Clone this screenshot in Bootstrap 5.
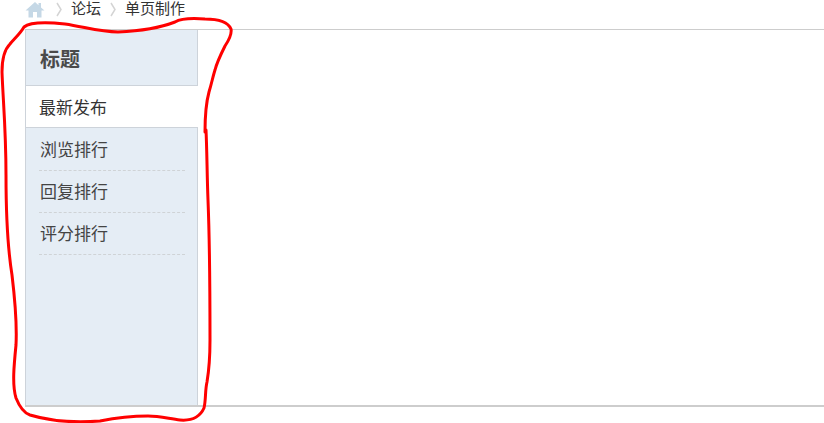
<!DOCTYPE html>
<html lang="zh-CN">
<head>
<meta charset="utf-8">
<title>单页制作</title>
<link rel="stylesheet" href="https://cdn.jsdelivr.net/npm/bootstrap@5.3.0/dist/css/bootstrap.min.css">
<style>
html,body{height:423px;overflow:hidden;background:#fff}
body{font-family:"Liberation Sans","Noto Sans CJK SC",sans-serif;color:#444;position:relative}
.crumbs{height:29px;padding-left:25px;padding-bottom:11px;font-size:15px;line-height:16px;color:#333}
.crumbs .sep{margin:0 9px 0 11px;display:block}
.crumbs .sep2{margin-left:9px}
.main-area{margin-left:25px;height:378px;border-top:1px solid #cdcdcd;border-bottom:2px solid #cdcdcd}
.side{width:173px;height:100%;background:#e5edf5;border-left:1px solid #cdd3da;border-right:1px solid #cdd3da}
.side-title{height:56px;margin:0;padding:0 14px;font-size:20px;font-weight:700;line-height:60px;color:#4a4a4a;border-bottom:1px solid #cdd3da}
.side-active{height:42px;background:#fff;margin:0 -1px 1px 0;padding-left:13px;font-size:17px;line-height:46px;color:#333;border-bottom:1px solid #cdd3da;text-decoration:none;display:block}
.side-link{height:42px;margin:0 12px 0 13px;padding-left:1px;font-size:17px;line-height:44px;color:#444;border-bottom:1px dashed #cfd3d6;text-decoration:none;display:block}
.scribble{position:absolute;left:0;top:0;pointer-events:none}
</style>
</head>
<body>
<div class="crumbs d-flex align-items-center">
<svg width="20" height="17" viewBox="0 0 20 17"><path d="M10 1 0.500 9.500H3.500V16.500H8V11H12V16.500H16.500V9.500H19.500L16 6.400V2H13.500V4.200Z" fill="#c5d8e6"/></svg>
<svg class="sep" width="6" height="15" viewBox="0 0 6 15"><path d="M1 1 5 7.500 1 14" fill="none" stroke="#d4d4d4" stroke-width="1.500"/></svg>
<span>论坛</span>
<svg class="sep sep2" width="6" height="15" viewBox="0 0 6 15"><path d="M1 1 5 7.500 1 14" fill="none" stroke="#d4d4d4" stroke-width="1.500"/></svg>
<span>单页制作</span>
</div>
<div class="main-area">
<nav class="side">
<h2 class="side-title">标题</h2>
<a class="side-active" href="#">最新发布</a>
<a class="side-link" href="#">浏览排行</a>
<a class="side-link" href="#">回复排行</a>
<a class="side-link" href="#">评分排行</a>
</nav>
</div>
<svg class="scribble" width="824" height="423" viewBox="0 0 824 423"><path d="M205 132C205 118 206 103 209 92C212 82 213 76 215 70C217 62 221 54 225 46C229 40 232 34 231 29C228 22 217 19 205 19C192 18 180 19 175 22C162 27 140 31 118 32C100 32 85 27 65 24C45 22 30 22 24 27C20 34 14 39 10 44C4 50 2 60 2 72C3 100 6 130 6 175C6 215 8 250 12 275C15 300 17 325 16 345C14 365 12 385 16 398C20 408 24 413 30 415C50 421 75 423 100 421C115 418 130 416 148 416C160 416 170 419 180 420C192 421 200 417 204 408C206 400 205 390 207 382C209 370 210 358 210 340C210 300 210 250 208 200C207 175 207 150 206 130" fill="none" stroke="#ff0000" stroke-width="3" stroke-linecap="round"/></svg>
<script src="https://cdn.jsdelivr.net/npm/bootstrap@5.3.0/dist/js/bootstrap.bundle.min.js"></script>
</body>
</html>
